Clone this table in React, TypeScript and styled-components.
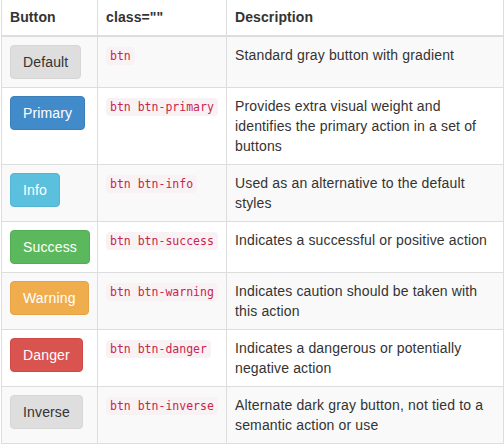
import React from "react";
import styled, { createGlobalStyle } from "styled-components";

const Global = createGlobalStyle`
  html, body { margin: 0; padding: 0; background: #fff; }
  body {
    font-family: "Liberation Sans", Arial, sans-serif;
    font-size: 14px;
    line-height: 20px;
    color: #333;
  }
`;

const Table = styled.table`
  width: 502px;
  margin: -2px 0 0 1px;
  border-collapse: collapse;
  border-spacing: 0;
  border: 1px solid #ddd;
  table-layout: fixed;
`;

const Col = styled.col<{ $w: number }>`
  width: ${(p) => p.$w}px;
`;

const Th = styled.th`
  text-align: left;
  font-weight: bold;
  padding: 8px;
  line-height: 20px;
  border: 1px solid #ddd;
  border-bottom: 2px solid #ddd;
  vertical-align: bottom;
  letter-spacing: 0.1px;
`;

const Row = styled.tr<{ $striped: boolean }>`
  background: ${(p) => (p.$striped ? "#f9f9f9" : "#fff")};
`;

const Td = styled.td`
  padding: 8px;
  line-height: 20px;
  border: 1px solid #ddd;
  vertical-align: top;
  letter-spacing: 0.15px;
`;

const Code = styled.code`
  font-family: "DejaVu Sans Mono", "Liberation Mono", monospace;
  font-size: 11.5px;
  letter-spacing: 0;
  color: #c7254e;
  background: #f9f2f4;
  padding: 2px 4px;
  border-radius: 4px;
  white-space: nowrap;
`;

type Variant = "default" | "primary" | "info" | "success" | "warning" | "danger" | "inverse";

const palette: Record<Variant, { bg: string; border: string; color: string }> = {
  default: { bg: "#dedede", border: "#d6d6d6", color: "#333" },
  primary: { bg: "#428bca", border: "#3c80bb", color: "#fff" },
  info: { bg: "#5bc0de", border: "#52b6d4", color: "#fff" },
  success: { bg: "#5cb85c", border: "#53ad53", color: "#fff" },
  warning: { bg: "#f0ad4e", border: "#e6a345", color: "#fff" },
  danger: { bg: "#d9534f", border: "#cf4a46", color: "#fff" },
  inverse: { bg: "#dedede", border: "#d6d6d6", color: "#333" },
};

const Button = styled.button<{ $v: Variant }>`
  display: inline-block;
  font-family: "Liberation Sans", Arial, sans-serif;
  font-size: 14px;
  line-height: 20px;
  letter-spacing: 0.15px;
  padding: 6px 12px;
  border-radius: 4px;
  border: 1px solid ${(p) => palette[p.$v].border};
  background: ${(p) => palette[p.$v].bg};
  color: ${(p) => palette[p.$v].color};
  cursor: pointer;
  margin: 0;
`;

const rows: { v: Variant; label: string; cls: string; desc: string }[] = [
  { v: "default", label: "Default", cls: "btn", desc: "Standard gray button with gradient" },
  {
    v: "primary",
    label: "Primary",
    cls: "btn btn-primary",
    desc: "Provides extra visual weight and identifies the primary action in a set of buttons",
  },
  { v: "info", label: "Info", cls: "btn btn-info", desc: "Used as an alternative to the default styles" },
  { v: "success", label: "Success", cls: "btn btn-success", desc: "Indicates a successful or positive action" },
  { v: "warning", label: "Warning", cls: "btn btn-warning", desc: "Indicates caution should be taken with this action" },
  { v: "danger", label: "Danger", cls: "btn btn-danger", desc: "Indicates a dangerous or potentially negative action" },
  {
    v: "inverse",
    label: "Inverse",
    cls: "btn btn-inverse",
    desc: "Alternate dark gray button, not tied to a semantic action or use",
  },
];

export default function App() {
  return (
    <>
      <Global />
      <Table>
        <colgroup>
          <Col $w={96} />
          <Col $w={129} />
          <Col $w={277} />
        </colgroup>
        <thead>
          <tr>
            <Th>Button</Th>
            <Th>class=""</Th>
            <Th>Description</Th>
          </tr>
        </thead>
        <tbody>
          {rows.map((r, i) => (
            <Row key={r.v} $striped={i % 2 === 0}>
              <Td>
                <Button $v={r.v}>{r.label}</Button>
              </Td>
              <Td>
                <Code>{r.cls}</Code>
              </Td>
              <Td>{r.desc}</Td>
            </Row>
          ))}
        </tbody>
      </Table>
    </>
  );
}
